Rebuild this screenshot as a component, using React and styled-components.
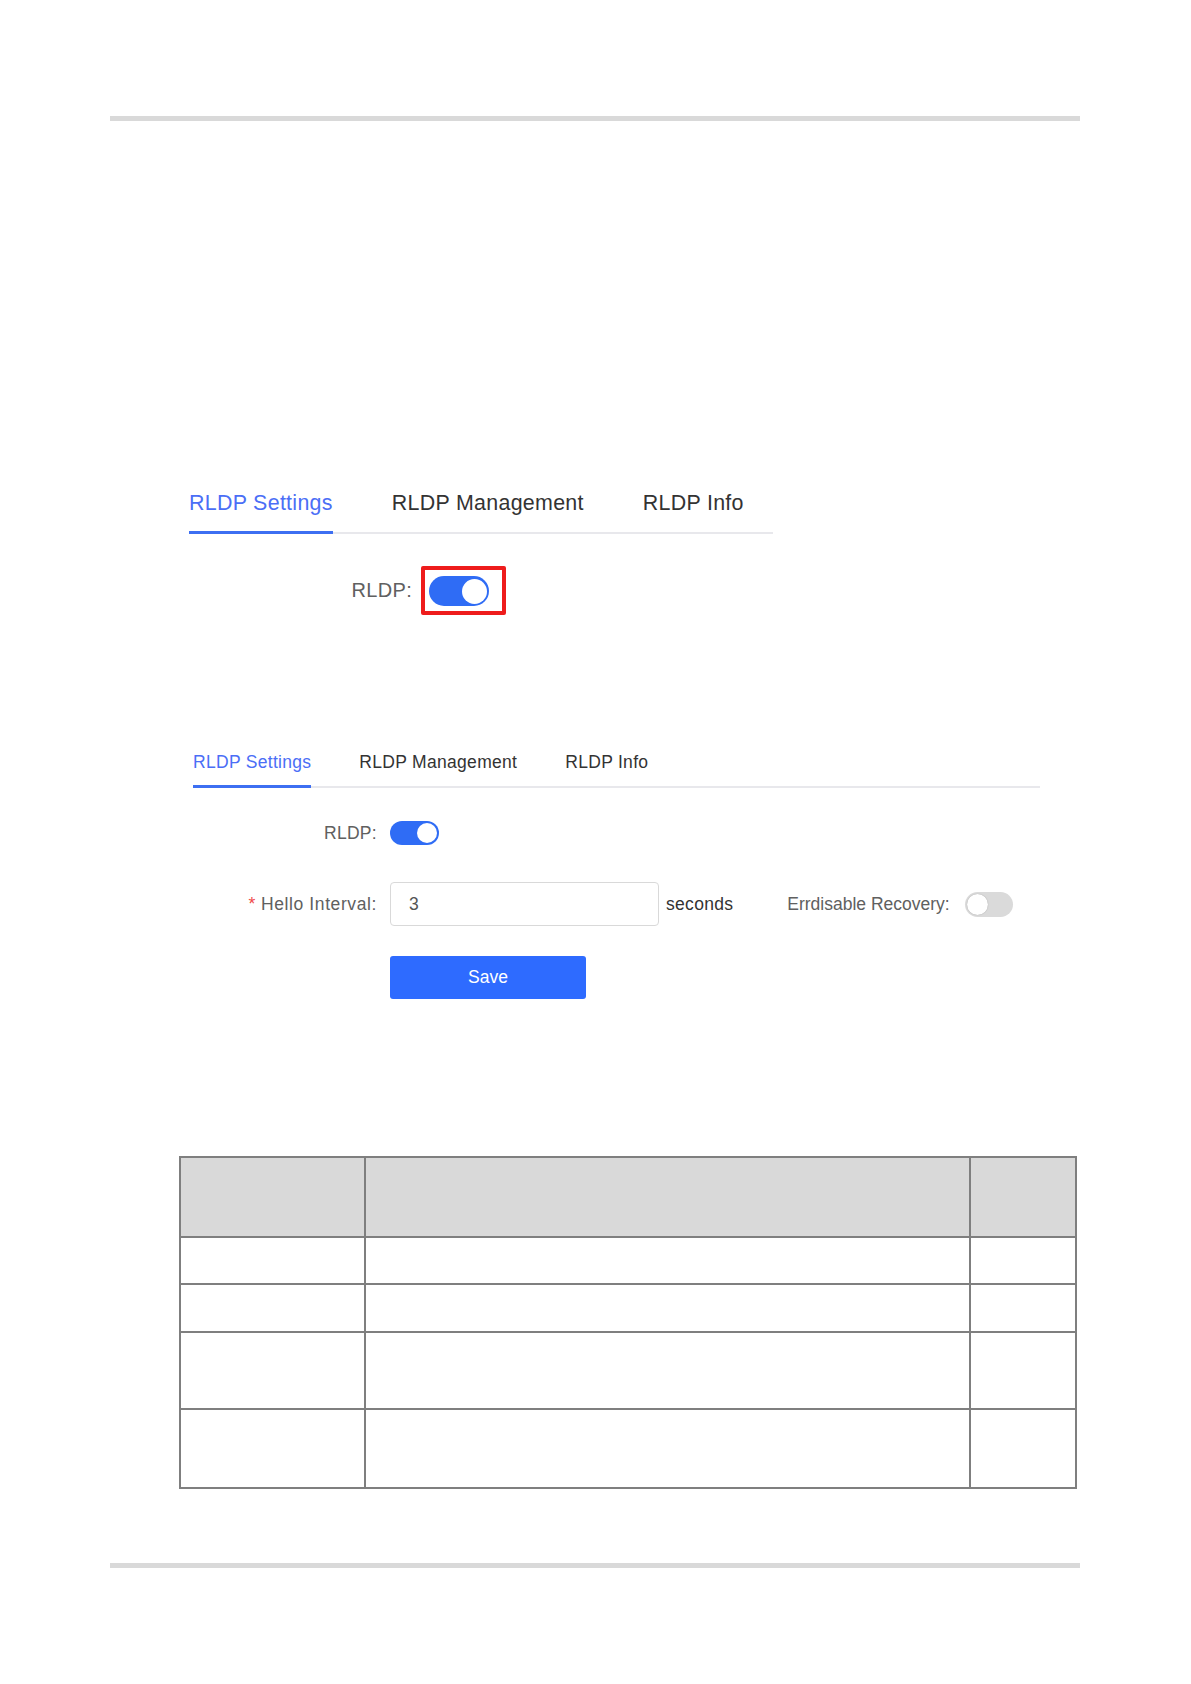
import React from "react";
import styled, { createGlobalStyle } from "styled-components";

const GlobalStyle = createGlobalStyle`
  html, body {
    margin: 0;
    padding: 0;
    background: #ffffff;
  }
  body {
    font-family: "Liberation Sans", Arial, sans-serif;
    color: #333333;
  }
`;

const Page = styled.div`
  width: 970px;
  padding: 116px 111px 110px 110px;
`;

const Rule = styled.div`
  height: 5px;
  background: #d9d9d9;
  margin-top: ${({ $top }) => $top || 0}px;
`;

const Figure = styled.section`
  margin-top: ${({ $top }) => $top}px;
  margin-left: ${({ $left }) => $left}px;
  width: ${({ $width }) => $width}px;
`;

const TabBar = styled.div`
  display: flex;
  gap: ${({ $gap }) => $gap}px;
  box-shadow: inset 0 -2px 0 #e8e8ec;
`;

const Tab = styled.div`
  font-size: ${({ $size }) => $size}px;
  line-height: ${({ $line }) => $line}px;
  letter-spacing: 0.3px;
  padding-bottom: ${({ $pad }) => $pad}px;
  border-bottom: 3px solid ${({ $active }) => ($active ? "#3d6ff2" : "transparent")};
  color: ${({ $active }) => ($active ? "#4b6ef6" : "#333333")};
  white-space: nowrap;
`;

const Row = styled.div`
  display: flex;
  align-items: center;
  margin-top: ${({ $top }) => $top}px;
`;

const Label = styled.div`
  width: ${({ $width }) => $width}px;
  margin-right: ${({ $gap }) => $gap}px;
  text-align: right;
  font-size: ${({ $size }) => $size}px;
  letter-spacing: ${({ $spacing }) => $spacing ?? 0.3}px;
  color: #606060;
  white-space: nowrap;
`;

const Required = styled.span`
  color: #f04a4a;
  margin-right: 5px;
`;

const Highlight = styled.div`
  border: 4px solid #ee1c1c;
  border-radius: 2px;
  padding: 6px 13px 5px 4px;
  display: flex;
`;

const Switch = styled.div`
  position: relative;
  width: ${({ $w }) => $w}px;
  height: ${({ $h }) => $h}px;
  border-radius: ${({ $h }) => $h / 2}px;
  background: ${({ $on }) => ($on ? "#2f6cf5" : "#dadada")};
  flex-shrink: 0;

  &::after {
    content: "";
    position: absolute;
    top: ${({ $h, $knob }) => ($h - $knob) / 2}px;
    ${({ $on }) => ($on ? "right" : "left")}: 2px;
    width: ${({ $knob }) => $knob}px;
    height: ${({ $knob }) => $knob}px;
    border-radius: 50%;
    background: #ffffff;
    box-shadow: ${({ $on }) => ($on ? "none" : "0 0 1px rgba(0,0,0,0.35)")};
  }
`;

const Input = styled.div`
  box-sizing: border-box;
  width: 269px;
  height: 44px;
  border: 1px solid #d9d9d9;
  border-radius: 4px;
  padding-left: 18px;
  display: flex;
  align-items: center;
  font-size: 17.5px;
  color: #555555;
`;

const Text = styled.span`
  font-size: 17.5px;
  letter-spacing: ${({ $spacing }) => $spacing ?? 0.3}px;
  color: ${({ $muted }) => ($muted ? "#606060" : "#333333")};
  margin-left: ${({ $left }) => $left}px;
  margin-right: ${({ $right }) => $right || 0}px;
  white-space: nowrap;
`;

const SaveButton = styled.button`
  width: 196px;
  height: 43px;
  margin-left: 197px;
  border: none;
  border-radius: 3px;
  background: #2e6bff;
  color: #ffffff;
  font-family: inherit;
  font-size: 17.5px;
`;

const Table = styled.table`
  margin-top: 157px;
  margin-left: 69px;
  width: 896px;
  border-collapse: collapse;
  table-layout: fixed;

  td, th {
    border: 2px solid #7f7f7f;
    padding: 0;
  }
  th {
    background: #d9d9d9;
  }
`;

const tabs = ["RLDP Settings", "RLDP Management", "RLDP Info"];
const rowHeights = [47, 48, 77, 79];

const App = () => {
  return (
    <>
      <GlobalStyle />
      <Page>
        <Rule />

        <Figure $top={367} $left={79} $width={584}>
          <TabBar $gap={59}>
            {tabs.map((t, i) => (
              <Tab key={t} $active={i === 0} $size={21.4} $line={30} $pad={13}>
                {t}
              </Tab>
            ))}
          </TabBar>
          <Row $top={32}>
            <Label $width={223} $gap={9} $size={20}>
              RLDP:
            </Label>
            <Highlight>
              <Switch $on $w={60} $h={30} $knob={25} />
            </Highlight>
          </Row>
        </Figure>

        <Figure $top={135} $left={83} $width={847}>
          <TabBar $gap={48}>
            {tabs.map((t, i) => (
              <Tab key={t} $active={i === 0} $size={17.5} $line={24} $pad={11}>
                {t}
              </Tab>
            ))}
          </TabBar>
          <Row $top={33}>
            <Label $width={184} $gap={13} $size={17.5}>
              RLDP:
            </Label>
            <Switch $on $w={49} $h={24} $knob={20} />
          </Row>
          <Row $top={37}>
            <Label $width={184} $gap={13} $size={17.5} $spacing={0.6}>
              <Required>*</Required>Hello Interval:
            </Label>
            <Input>3</Input>
            <Text $left={7}>seconds</Text>
            <Text $left={54} $right={15} $spacing={0} $muted>
              Errdisable Recovery:
            </Text>
            <Switch $w={48} $h={25} $knob={21} />
          </Row>
          <Row $top={30}>
            <SaveButton>Save</SaveButton>
          </Row>
        </Figure>

        <Table>
          <colgroup>
            <col style={{ width: 185 }} />
            <col style={{ width: 605 }} />
            <col style={{ width: 106 }} />
          </colgroup>
          <thead>
            <tr style={{ height: 80 }}>
              <th />
              <th />
              <th />
            </tr>
          </thead>
          <tbody>
            {rowHeights.map((h, i) => (
              <tr key={i} style={{ height: h }}>
                <td />
                <td />
                <td />
              </tr>
            ))}
          </tbody>
        </Table>

        <Rule $top={74} />
      </Page>
    </>
  );
};

export default App;
